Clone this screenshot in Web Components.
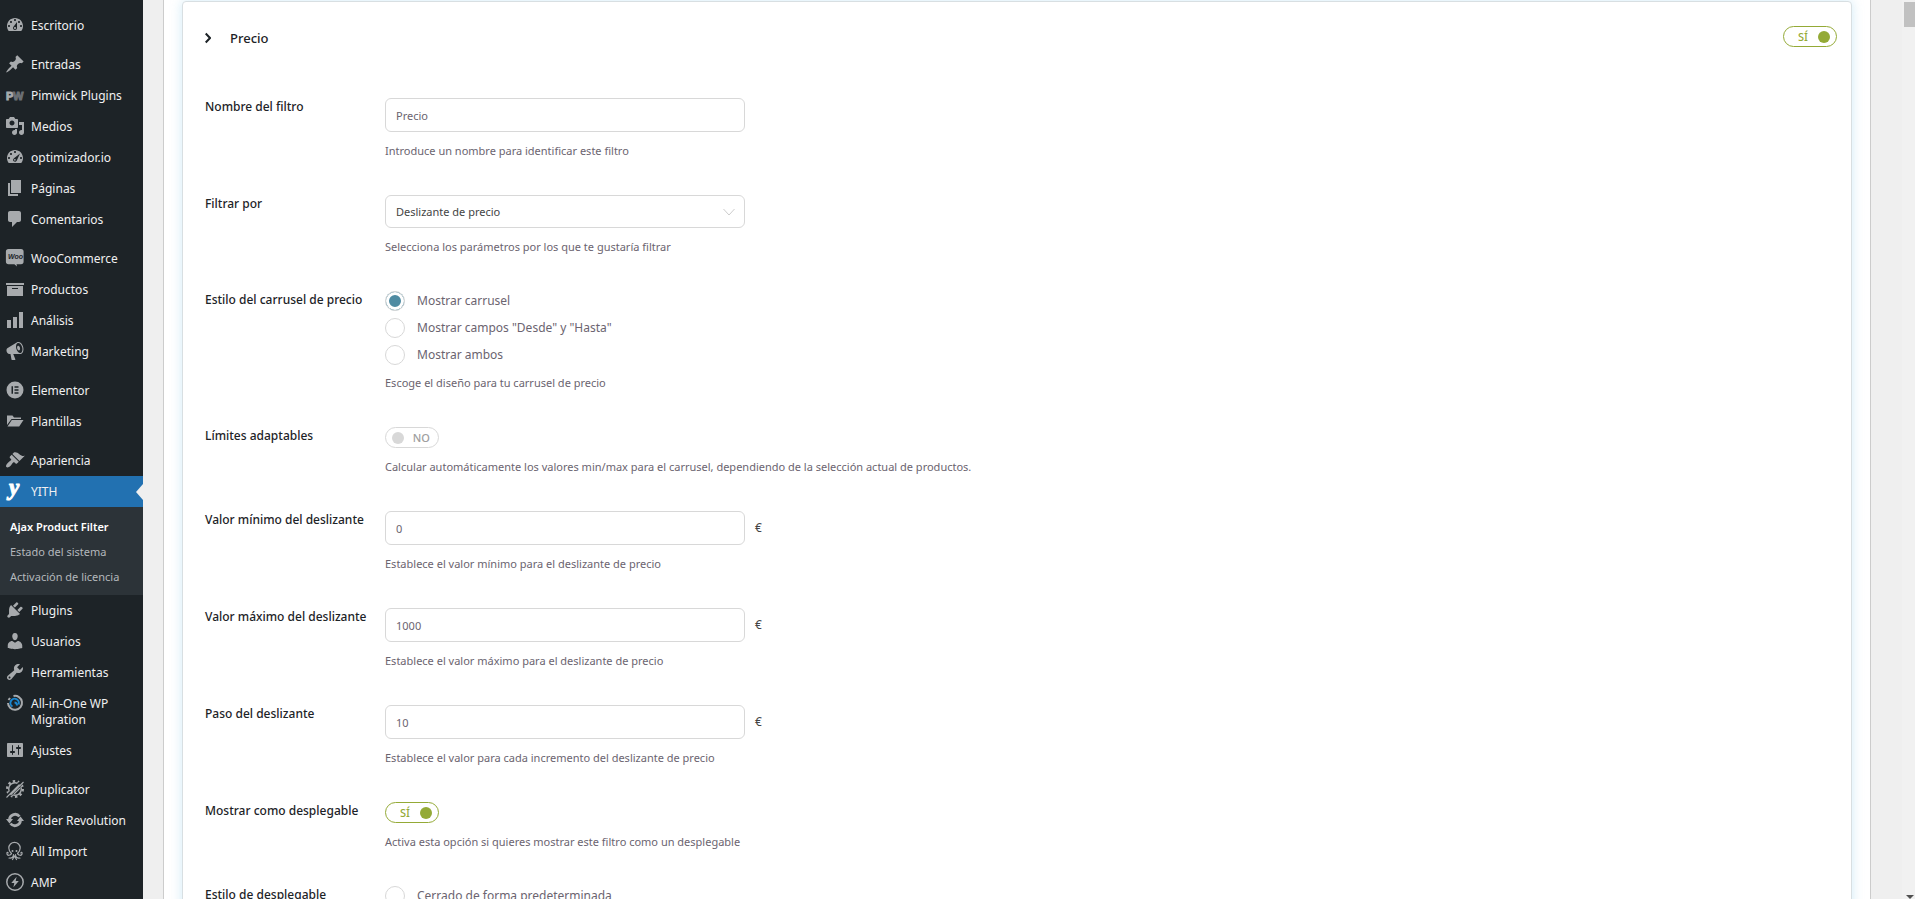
<!DOCTYPE html>
<html lang="es">
<head>
<meta charset="utf-8">
<meta name="viewport" content="width=device-width, initial-scale=1">
<title>Ajax Product Filter</title>
<style>
  html, body {
    height: 100%;
    margin: 0;
  }
  body {
    overflow: hidden;
    background: #efefef;
    font: 12px/16px "Noto Sans", "Open Sans", sans-serif;
    color: #1d2327;
  }
</style>
</head>
<body>
<admin-shell>
  <admin-menu slot="menu">
    <menu-item icon="dashboard">Escritorio</menu-item>
    <menu-gap></menu-gap>
    <menu-item icon="pin">Entradas</menu-item>
    <menu-item icon="pimwick">Pimwick Plugins</menu-item>
    <menu-item icon="media">Medios</menu-item>
    <menu-item icon="gauge">optimizador.io</menu-item>
    <menu-item icon="pages">Páginas</menu-item>
    <menu-item icon="comments">Comentarios</menu-item>
    <menu-gap></menu-gap>
    <menu-item icon="woo">WooCommerce</menu-item>
    <menu-item icon="archive">Productos</menu-item>
    <menu-item icon="chart">Análisis</menu-item>
    <menu-item icon="megaphone">Marketing</menu-item>
    <menu-gap></menu-gap>
    <menu-item icon="elementor">Elementor</menu-item>
    <menu-item icon="folder">Plantillas</menu-item>
    <menu-gap></menu-gap>
    <menu-item icon="brush">Apariencia</menu-item>
    <menu-item icon="yith" current>YITH</menu-item>
    <sub-menu>
      <sub-item current>Ajax Product Filter</sub-item>
      <sub-item>Estado del sistema</sub-item>
      <sub-item>Activación de licencia</sub-item>
    </sub-menu>
    <menu-item icon="plug">Plugins</menu-item>
    <menu-item icon="user">Usuarios</menu-item>
    <menu-item icon="wrench">Herramientas</menu-item>
    <menu-item icon="migration">All-in-One WP Migration</menu-item>
    <menu-item icon="settings">Ajustes</menu-item>
    <menu-gap></menu-gap>
    <menu-item icon="duplicator">Duplicator</menu-item>
    <menu-item icon="revolution">Slider Revolution</menu-item>
    <menu-item icon="octopus">All Import</menu-item>
    <menu-item icon="amp">AMP</menu-item>
  </admin-menu>

  <filter-card heading="Precio">
    <text-field label="Nombre del filtro" value="Precio">Introduce un nombre para identificar este filtro</text-field>
    <select-field label="Filtrar por" options="Deslizante de precio">Selecciona los parámetros por los que te gustaría filtrar</select-field>
    <radio-field label="Estilo del carrusel de precio" options='Mostrar carrusel|Mostrar campos "Desde" y "Hasta"|Mostrar ambos' selected="0">Escoge el diseño para tu carrusel de precio</radio-field>
    <switch-field label="Límites adaptables">Calcular automáticamente los valores min/max para el carrusel, dependiendo de la selección actual de productos.</switch-field>
    <text-field label="Valor mínimo del deslizante" value="0" unit="€">Establece el valor mínimo para el deslizante de precio</text-field>
    <text-field label="Valor máximo del deslizante" value="1000" unit="€">Establece el valor máximo para el deslizante de precio</text-field>
    <text-field label="Paso del deslizante" value="10" unit="€">Establece el valor para cada incremento del deslizante de precio</text-field>
    <switch-field label="Mostrar como desplegable" on>Activa esta opción si quieres mostrar este filtro como un desplegable</switch-field>
    <radio-field label="Estilo de desplegable" options="Cerrado de forma predeterminada"></radio-field>
  </filter-card>

  <scroll-rail slot="rail"></scroll-rail>
</admin-shell>

<script>
const DIAL = 'M3.76 16h12.48c1.1-1.37 1.76-3.11 1.76-5 0-4.42-3.58-8-8-8s-8 3.58-8 8c0 1.89.66 3.63 1.76 5zM10 4c.55 0 1 .45 1 1s-.45 1-1 1-1-.45-1-1 .45-1 1-1zM6 6c.55 0 1 .45 1 1s-.45 1-1 1-1-.45-1-1 .45-1 1-1z';

const ICONS = {
  dashboard: `<path fill-rule="evenodd" d="${DIAL}m8 0c.55 0 1 .45 1 1s-.45 1-1 1-1-.45-1-1 .45-1 1-1zm-5.37 5.55L12 7v6c0 1.1-.9 2-2 2s-2-.9-2-2c0-.57.24-1.08.63-1.45zM4 10c.55 0 1 .45 1 1s-.45 1-1 1-1-.45-1-1 .45-1 1-1zm12 0c.55 0 1 .45 1 1s-.45 1-1 1-1-.45-1-1 .45-1 1-1zm-5 3c0-.55-.45-1-1-1s-1 .45-1 1 .45 1 1 1 1-.45 1-1z"/>`,
  gauge: `<path fill-rule="evenodd" d="${DIAL}M4 10c.55 0 1 .45 1 1s-.45 1-1 1-1-.45-1-1 .45-1 1-1zm12 0c.55 0 1 .45 1 1s-.45 1-1 1-1-.45-1-1 .45-1 1-1zM9 11.2L15 6.6l-3.2 6.8c-.6 1.2-1.6 1.6-2.7 1.2s-1.6-2.2-.1-3.4zm1.8 1.6c0-.5-.4-.9-.9-.9s-.9.4-.9.9.4.9.9.9.9-.4.9-.9z"/>`,
  pin: '<path d="M10.44 3.02l1.82-1.82 6.36 6.35-1.83 1.82c-1.05-.68-2.48-.57-3.41.36l-.75.75c-.92.93-1.04 2.35-.35 3.41l-1.83 1.82-2.41-2.41-2.8 2.79c-.42.42-3.38 2.71-3.8 2.29s1.86-3.39 2.28-3.81l2.79-2.79L4.1 9.36l1.83-1.82c1.05.69 2.48.57 3.4-.36l.75-.75c.93-.92 1.05-2.35.36-3.41z"/>',
  pimwick: '<text x="1" y="15" font-family="Liberation Sans" font-weight="700" font-size="11" stroke="currentColor" stroke-width="1">P</text><text x="8" y="15" font-family="Liberation Sans" font-weight="700" font-size="11" style="fill:#6b7075" stroke="#6b7075" stroke-width="1">W</text>',
  media: '<path fill-rule="evenodd" d="M13 11V4c0-.55-.45-1-1-1h-1.67L9 1H5L3.67 3H2c-.55 0-1 .45-1 1v7c0 .55.45 1 1 1h10c.55 0 1-.45 1-1zM7 4.5c1.38 0 2.5 1.12 2.5 2.5S8.38 9.5 7 9.5 4.5 8.38 4.5 7 5.62 4.5 7 4.5zM14 6h5v10.5c0 1.38-1.12 2.5-2.5 2.5S14 17.88 14 16.5s1.12-2.5 2.5-2.5c.17 0 .34.02.5.05V9h-3V6zm-4 8.05V13h2v3.5c0 1.38-1.12 2.5-2.5 2.5S7 17.88 7 16.5 8.12 14 9.5 14c.17 0 .34.02.5.05z"/>',
  pages: '<path d="M6 15V2h10v13H6zm-1 1h8v2H3V5h2v11z"/>',
  comments: '<path d="M5 2h9c1.1 0 2 .9 2 2v7c0 1.1-.9 2-2 2h-2l-5 5v-5H5c-1.1 0-2-.9-2-2V4c0-1.1.9-2 2-2z"/>',
  woo: '<path d="M3.500 1h12.500a2.600 2.600 0 0 1 2.600 2.600v10a2.600 2.600 0 0 1-2.600 2.600h-4.500l.5 2.300-2.600-2.300H3.500A2.600 2.600 0 0 1 .9 13.600v-10A2.600 2.600 0 0 1 3.500 1z"/><text x="3" y="11" font-family="Liberation Sans" font-weight="700" font-style="italic" font-size="7" style="fill:#1d2327">Woo</text>',
  archive: '<path fill-rule="evenodd" d="M19 4v2H1V4h18zM2 7h16v10H2V7zm11 3V9H7v1h6z"/>',
  chart: '<path d="M18 18V2h-4v16h4zm-6 0V7H8v11h4zm-6 0v-8H2v8h4z"/>',
  megaphone: '<path fill-rule="evenodd" d="M18.15 5.94c.46 1.62.38 3.22-.02 4.48-.42 1.28-1.26 2.18-2.3 2.48-.16.06-.26.06-.4.06-.06.02-.12.02-.18.02-.06.02-.14.02-.22.02h-6.8l2.22 5.5c.02.14-.06.26-.14.34-.08.1-.24.16-.34.16H6.95c-.1 0-.26-.06-.34-.16-.08-.08-.16-.2-.14-.34l-1-5.5H4.25l-.02-.02c-.5.06-1.08-.18-1.54-.62s-.88-1.08-1.06-1.88c-.24-.8-.2-1.56-.02-2.2.18-.62.58-1.08 1.06-1.3l.02-.02 9-5.4c.1-.06.18-.1.24-.16.06-.04.14-.08.24-.12.16-.08.28-.12.5-.18 1.04-.3 2.24.1 3.22.98s1.84 2.24 2.26 3.86zm-2.58 5.98h-.02c.4-.1.74-.34 1.04-.7.58-.7.86-1.76.86-3.04 0-.64-.1-1.3-.28-1.98-.34-1.36-1.02-2.5-1.78-3.24s-1.68-1.1-2.46-.88c-.82.22-1.4.96-1.7 2-.32 1.04-.28 2.36.06 3.72.38 1.36 1 2.5 1.8 3.24.78.74 1.62 1.1 2.48.88zm-2.54-7.08c.22-.04.42-.02.62.04.38.16.76.48 1.02 1s.42 1.2.42 1.78c0 .3-.04.56-.12.8-.18.48-.44.84-.86.94-.34.1-.8-.06-1.14-.4s-.64-.86-.78-1.5c-.18-.62-.12-1.24.02-1.72s.48-.84.82-.94z"/>',
  elementor: '<path fill-rule="evenodd" d="M10 1.5a8.5 8.5 0 1 0 0 17 8.5 8.5 0 0 0 0-17zM6.5 6.3H8v7.4H6.5zM9.5 6.3h4v1.5h-4zM9.5 9.25h4v1.5h-4zM9.5 12.2h4v1.5h-4z"/>',
  folder: '<path d="M2 4.500h5.500l1.500 2h7V8H6.500L2 14zM6.800 9H18.500l-4.300 6.500H2.500z"/>',
  brush: '<path d="M14.48 11.06L7.41 3.99l1.5-1.5c.5-.56 2.3-.47 3.51.32 1.21.8 1.43 1.28 2.91 2.1 1.18.64 2.45 1.26 4.45.85zm-.71.71L6.7 4.7 4.93 6.47c-.39.39-.39 1.02 0 1.41l1.06 1.06c.39.39.39 1.03 0 1.42-.6.6-1.43 1.11-2.21 1.69-.35.26-.7.53-1.01.84C1.43 14.23.4 16.08 1.4 17.07c.99 1 2.84-.03 4.18-1.36.31-.31.58-.66.85-1.02.57-.78 1.08-1.61 1.69-2.21.39-.39 1.02-.39 1.41 0l1.06 1.06c.39.39 1.02.39 1.41 0z"/>',
  yith: '<text x="4" y="14" font-family="Liberation Serif" font-weight="700" font-style="italic" font-size="23" stroke="currentColor" stroke-width="1">y</text>',
  plug: '<path d="M13.11 4.36L9.87 7.6 8 5.73l3.24-3.24c.35-.34 1.05-.2 1.56.32.52.51.66 1.21.31 1.55zm-8 1.77l.91-1.12 9.01 9.01-1.19.84c-.71.71-2.63 1.16-3.82 1.16H6.14L4.9 17.26c-.59.59-1.54.59-2.12 0-.59-.58-.59-1.53 0-2.12l1.24-1.24v-3.88c0-1.13.4-3.19 1.09-3.89zm7.26 3.97l3.24-3.24c.34-.35 1.04-.21 1.55.31.52.51.66 1.21.31 1.55l-3.24 3.25z"/>',
  user: '<path d="M10 9.25c-2.27 0-2.73-3.44-2.73-3.44C7 4.02 7.82 2 9.97 2c2.16 0 2.98 2.02 2.71 3.81 0 0-.41 3.44-2.68 3.44zm0 2.57L12.72 10c2.39 0 4.52 2.33 4.52 4.53v2.49s-3.65 1.13-7.24 1.13c-3.65 0-7.24-1.13-7.24-1.13v-2.49c0-2.25 1.94-4.48 4.47-4.48z"/>',
  wrench: '<path fill-rule="evenodd" d="M16.68 9.77c-1.34 1.34-3.3 1.67-4.95.99l-5.41 6.52c-.99.99-2.59.99-3.58 0s-.99-2.59 0-3.57l6.52-5.42c-.68-1.65-.35-3.61.99-4.95 1.28-1.28 3.12-1.62 4.72-1.06l-2.89 2.89 2.82 2.82 2.86-2.87c.53 1.58.18 3.39-1.08 4.65zM3.81 16.21c.4.39 1.04.39 1.43 0 .4-.4.4-1.04 0-1.43-.39-.4-1.03-.4-1.43 0-.39.39-.39 1.03 0 1.43z"/>',
  migration: '<g fill="none" stroke-width="2"><path d="M8.500 3a7 7 0 1 1-5.500 7" stroke="currentColor"/><path d="M3.500 7l1.500-2" stroke="currentColor"/><path d="M7.500 13.500a4.200 4.200 0 1 1 6-2" stroke="#1a86d0"/><path d="M9.500 9.500c2 0 2.500 1.200 2.500 3" stroke="#1a86d0"/></g>',
  settings: '<path fill-rule="evenodd" d="M18 16V4c0-.55-.45-1-1-1H3c-.55 0-1 .45-1 1v12c0 .55.45 1 1 1h14c.55 0 1-.45 1-1zM8 11h1c.55 0 1 .45 1 1s-.45 1-1 1H8v1.5c0 .28-.22.5-.5.5s-.5-.22-.5-.5V13H6c-.55 0-1-.45-1-1s.45-1 1-1h1V5.5c0-.28.22-.5.5-.5s.5.22.5.5V11zm5-2h-1c-.55 0-1-.45-1-1s.45-1 1-1h1V5.5c0-.28.22-.5.5-.5s.5.22.5.5V7h1c.55 0 1 .45 1 1s-.45 1-1 1h-1v5.5c0 .28-.22.5-.5.5s-.5-.22-.5-.5V9z"/>',
  duplicator: '<g fill="none" stroke="currentColor"><circle cx="10" cy="10" r="7.800" stroke-width="2.400" stroke-dasharray="2.400 2.500"/><circle cx="10" cy="10" r="6.300" stroke-width="1.400"/><path d="M2.500 17.500L17.500 2.500" stroke="#1d2327" stroke-width="4.500"/><path d="M1.500 18.500L14.500 5.500M5.500 16L18.500 3M9 15l6-6" stroke-width="1.100"/></g>',
  revolution: '<g fill="none" stroke="currentColor" stroke-width="2.800"><path d="M4.500 9.500a5.600 5.600 0 0 1 10-3M15.500 10.500a5.600 5.600 0 0 1-10 3"/></g><path d="M1 9h7l-3.500 4.500zM19 11h-7l3.500-4.500z"/>',
  octopus: '<g fill="none" stroke="currentColor" stroke-width="1.200" stroke-linecap="round"><path d="M6.500 12.500C4.500 10.500 3.800 8.500 3.800 7a5.700 5.700 0 0 1 11.400 0c0 1.500-.7 3.500-2.700 5.500"/><path d="M6.500 12.500c-1 2-4 2.500-4.500.5s1-2 1.200-1M12.500 12.500c1 2 4 2.500 4.500.5s-1-2-1.200-1M8.500 13.500c0 3-2 4-4.500 3.500M10.500 13.500c0 3 2 4 4.500 3.500M9.500 15l-2 3.500M9.500 15l2 3.500"/></g><circle cx="7.500" cy="10" r="1"/><circle cx="11.500" cy="10" r="1"/>',
  amp: '<circle cx="10" cy="10" r="8.200" fill="none" stroke="currentColor" stroke-width="1.500"/><path d="M11.600 4.800L6.300 11h3l-.9 4.300L13.800 9h-3.100z"/>'
};

class AdminShell extends HTMLElement {
  constructor() {
    super();
    this.attachShadow({ mode: 'open' }).innerHTML = `
      <style>
        :host {
          display: grid;
          grid-template-columns: 143px minmax(0, 1fr) 13px;
          height: 100vh;
          overflow: hidden;
        }
        main {
          padding: 0 31px 0 20px;
          display: flex;
          min-height: 0;
        }
        .panel {
          flex: 1;
          padding: 1px 18px 0;
          background: #fff;
          border: solid #ccc;
          border-width: 0 1px;
        }
      </style>
      <slot name="menu"></slot>
      <main><div class="panel"><slot></slot></div></main>
      <slot name="rail"></slot>
    `;
  }
}

class AdminMenu extends HTMLElement {
  constructor() {
    super();
    this.attachShadow({ mode: 'open' }).innerHTML = `
      <style>
        :host {
          display: block;
          background: #1d2327;
        }
        nav {
          display: flex;
          flex-direction: column;
          padding-top: 10px;
        }
      </style>
      <nav aria-label="Menú principal"><slot></slot></nav>
    `;
  }
}

class MenuGap extends HTMLElement {
  constructor() {
    super();
    this.attachShadow({ mode: 'open' }).innerHTML = `
      <style>:host { display: block; height: 8px; }</style>
    `;
  }
}

class MenuItem extends HTMLElement {
  constructor() {
    super();
    this.attachShadow({ mode: 'open' });
  }

  connectedCallback() {
    this.shadowRoot.innerHTML = `
      <style>
        :host {
          display: block;
          color: #f0f0f1;
          --icon-color: #a7aaad;
        }
        :host([current]) {
          position: relative;
          background: #2271b1;
          --icon-color: #fff;
        }
        :host([current])::after {
          content: "";
          position: absolute;
          right: 0;
          top: 50%;
          margin-top: -8px;
          border: 8px solid transparent;
          border-left-width: 0;
          border-right: 7px solid #efefef;
        }
        a {
          display: flex;
          gap: 6px;
          padding: 5px 12px 5px 5px;
          color: inherit;
          text-decoration: none;
        }
        svg {
          flex: none;
          width: 20px;
          height: 20px;
          overflow: visible;
          color: var(--icon-color);
          fill: currentColor;
        }
        span { padding: 3px 0 2px; }
      </style>
      <a href="#"><svg viewBox="0 0 20 20" aria-hidden="true">${ICONS[this.getAttribute('icon')]}</svg><span><slot></slot></span></a>
    `;
  }
}

class SubMenu extends HTMLElement {
  constructor() {
    super();
    this.attachShadow({ mode: 'open' }).innerHTML = `
      <style>
        :host {
          display: flex;
          flex-direction: column;
          padding: 7px 0 6px;
          background: #2c3338;
        }
      </style>
      <slot></slot>
    `;
  }
}

class SubItem extends HTMLElement {
  constructor() {
    super();
    this.attachShadow({ mode: 'open' }).innerHTML = `
      <style>
        :host {
          display: block;
          font-size: 11px;
          color: #b4b8bc;
        }
        :host([current]) {
          font-weight: 600;
          color: #fff;
        }
        a {
          display: block;
          padding: 5px 10px 4px;
          color: inherit;
          text-decoration: none;
        }
      </style>
      <a href="#"><slot></slot></a>
    `;
  }
}

class ToggleSwitch extends HTMLElement {
  constructor() {
    super();
    this.attachShadow({ mode: 'open' });
  }

  connectedCallback() {
    this.shadowRoot.innerHTML = `
      <style>
        :host { display: inline-block; }
        label {
          display: flex;
          align-items: center;
          justify-content: space-between;
          box-sizing: border-box;
          width: 54px;
          height: 21px;
          padding: 0 6px 0 14px;
          border: 1px solid #94aa36;
          border-radius: 11px;
          background: #fff;
          color: #94aa36;
          font-size: 11px;
          font-weight: 500;
          cursor: pointer;
        }
        input {
          appearance: none;
          order: 1;
          width: 12px;
          height: 12px;
          margin: 0;
          border-radius: 50%;
          background: #94aa36;
          cursor: pointer;
        }
        label.off {
          padding: 0 8px 0 6px;
          border-color: #d8d8d8;
          color: #a0a0a0;
        }
        .off input {
          order: 0;
          background: #d8d8d8;
        }
      </style>
      <label><input type="checkbox" role="switch"><span></span></label>
    `;
    this.input = this.shadowRoot.querySelector('input');
    this.input.checked = this.hasAttribute('on');
    this.input.setAttribute('aria-label', this.getAttribute('name'));
    this.input.addEventListener('change', this.update.bind(this));
    this.update();
  }

  update() {
    const on = this.input.checked;
    this.shadowRoot.querySelector('label').classList.toggle('off', !on);
    this.shadowRoot.querySelector('span').textContent = on ? 'SÍ' : 'NO';
  }
}

class FilterCard extends HTMLElement {
  constructor() {
    super();
    this.attachShadow({ mode: 'open' });
  }

  connectedCallback() {
    const heading = this.getAttribute('heading');
    this.shadowRoot.innerHTML = `
      <style>
        :host {
          display: block;
          min-height: 100vh;
          border: 1px solid #d8dfe2;
          border-radius: 4px;
          background: #fff;
          box-shadow: 0 0 12px rgba(140, 205, 235, 0.4);
        }
        header {
          display: flex;
          align-items: center;
          justify-content: space-between;
          padding: 24px 14px 0 22px;
        }
        h3 { margin: 0; font-size: 13px; font-weight: 500; }
        button {
          display: flex;
          align-items: center;
          gap: 19px;
          padding: 2px 0 0;
          border: 0;
          background: none;
          color: inherit;
          font: inherit;
          cursor: pointer;
        }
        svg {
          width: 6px;
          height: 12px;
          fill: none;
          stroke: currentColor;
          stroke-width: 2;
        }
        .fields {
          display: flex;
          flex-direction: column;
          gap: 36px;
          padding: 51px 22px 36px;
        }
      </style>
      <header>
        <h3><button aria-expanded="true"><svg viewBox="0 0 6 12" aria-hidden="true"><path d="M.7 1.500L5 6 .7 10.500"/></svg>${heading}</button></h3>
        <toggle-switch name="${heading}" on></toggle-switch>
      </header>
      <div class="fields"><slot></slot></div>
    `;
  }
}

// Shared row: label on the left, control and help text on the right.
class SettingField extends HTMLElement {
  constructor() {
    super();
    this.attachShadow({ mode: 'open' });
  }

  connectedCallback() {
    this.shadowRoot.innerHTML = `
      <style>
        :host {
          display: grid;
          grid-template-columns: 180px minmax(0, 1fr);
          align-items: start;
        }
        .label {
          padding-top: 1px;
          font-weight: 500;
        }
        .body {
          display: flex;
          flex-direction: column;
          gap: 11px;
        }
        .control {
          display: flex;
          align-items: center;
          gap: 10px;
          color: #444;
        }
        .help {
          font-size: 11px;
          color: #6b6470;
        }
        input[type=text], select {
          appearance: none;
          box-sizing: border-box;
          width: 100%;
          max-width: 360px;
          height: 34px;
          padding: 1px 10px 0;
          border: 1px solid #d8d8d8;
          border-radius: 6px;
          background: #fff;
          font: inherit;
          font-size: 11px;
          color: #6b6470;
        }
        ${this.styles()}
      </style>
      ${this.labelMarkup()}
      <div class="body">
        <div class="control">${this.control()}</div>
        <div class="help"><slot></slot></div>
      </div>
    `;
  }

  styles() {
    return '';
  }

  labelMarkup() {
    return `<label class="label" for="field">${this.getAttribute('label')}</label>`;
  }
}

class TextField extends SettingField {
  control() {
    const unit = this.getAttribute('unit');
    return `<input type="text" id="field" value="${this.getAttribute('value')}">${unit ? `<span>${unit}</span>` : ''}`;
  }
}

class SelectField extends SettingField {
  styles() {
    return `
      .control { display: grid; grid-template-columns: minmax(0, 360px); }
      .control > * { grid-area: 1 / 1; }
      select { height: 33px; color: #444; }
      svg {
        justify-self: end;
        width: 12px;
        height: 8px;
        margin-right: 10px;
        fill: none;
        stroke: #ccc;
        pointer-events: none;
      }
    `;
  }

  control() {
    const options = this.getAttribute('options').split('|');
    return `
      <select id="field">${options.map(o => `<option>${o}</option>`).join('')}</select>
      <svg viewBox="0 0 12 8" aria-hidden="true"><path d="M.5 1L6 7l5.500-6"/></svg>
    `;
  }
}

class RadioField extends SettingField {
  styles() {
    return `
      .body { gap: 10px; }
      .control {
        flex-direction: column;
        align-items: start;
        gap: 7px;
      }
      .control label {
        display: flex;
        align-items: center;
        gap: 12px;
        color: #6b6470;
      }
      input {
        appearance: none;
        box-sizing: border-box;
        width: 20px;
        height: 20px;
        margin: 0;
        border: 1px solid #d8d8d8;
        border-radius: 50%;
        background: #fff;
      }
      input:checked {
        background: #4e8ba2;
        box-shadow: inset 0 0 0 3px #fff;
      }
    `;
  }

  labelMarkup() {
    return `<span class="label" id="group">${this.getAttribute('label')}</span>`;
  }

  control() {
    const selected = this.getAttribute('selected');
    return this.getAttribute('options').split('|').map((o, i) => `
      <label><input type="radio" name="choice" aria-describedby="group"${String(i) === selected ? ' checked' : ''}>${o}</label>
    `).join('');
  }
}

// The switch names its own input, so the row label is plain text here.
class SwitchField extends SettingField {
  labelMarkup() {
    return `<span class="label">${this.getAttribute('label')}</span>`;
  }

  control() {
    return `<toggle-switch name="${this.getAttribute('label')}"${this.hasAttribute('on') ? ' on' : ''}></toggle-switch>`;
  }
}

class ScrollRail extends HTMLElement {
  constructor() {
    super();
    this.attachShadow({ mode: 'open' }).innerHTML = `
      <style>
        :host {
          display: flex;
          flex-direction: column;
          justify-content: space-between;
          align-items: flex-end;
          padding-top: 2px;
          background: #f1f1f1;
        }
        .thumb {
          width: 11px;
          height: 25px;
          background: #c1c1c1;
        }
        .down {
          margin-right: 1px;
          border: 4px solid transparent;
          border-top-color: #505050;
          border-bottom: 0;
        }
      </style>
      <div class="thumb"></div>
      <div class="down"></div>
    `;
  }
}

customElements.define('admin-shell', AdminShell);
customElements.define('admin-menu', AdminMenu);
customElements.define('menu-gap', MenuGap);
customElements.define('menu-item', MenuItem);
customElements.define('sub-menu', SubMenu);
customElements.define('sub-item', SubItem);
customElements.define('toggle-switch', ToggleSwitch);
customElements.define('filter-card', FilterCard);
customElements.define('text-field', TextField);
customElements.define('select-field', SelectField);
customElements.define('radio-field', RadioField);
customElements.define('switch-field', SwitchField);
customElements.define('scroll-rail', ScrollRail);
</script>
</body>
</html>
